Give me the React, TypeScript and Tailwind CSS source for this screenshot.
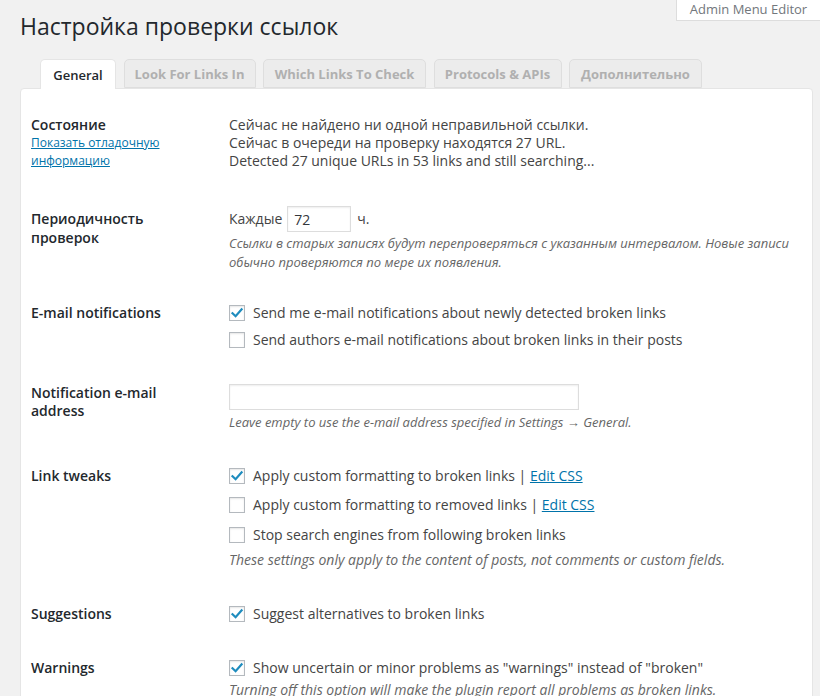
import React from 'react';

const Checkbox: React.FC<{ checked?: boolean }> = ({ checked }) => (
  <span className="w-4 h-4 shrink-0 bg-white border border-[#b4b9be] shadow-[inset_0_1px_2px_rgba(0,0,0,0.1)] flex items-center justify-center">
    {checked && (
      <svg width="14" height="14" viewBox="0 0 14 14">
        <path d="M2.5 7.2 L5.6 10.2 L11.6 3.4" fill="none" stroke="#1e8cbe" strokeWidth="2.2" strokeLinecap="square" />
      </svg>
    )}
  </span>
);

const CheckRow: React.FC<{ checked?: boolean; children: React.ReactNode; className?: string }> = ({ checked, children, className }) => (
  <label className={`flex items-center gap-2 h-[18px] ${className || ''}`}>
    <Checkbox checked={checked} />
    <span>{children}</span>
  </label>
);

const tabs = [
  { label: 'General', w: 'w-[76px]' },
  { label: 'Look For Links In', w: 'w-[132px]' },
  { label: 'Which Links To Check', w: 'w-[163px]' },
  { label: 'Protocols & APIs', w: 'w-[128px]' },
  { label: 'Дополнительно', w: 'w-[133px]' },
];

export default function App() {
  return (
    <div className="relative h-[696px] overflow-hidden bg-[#f1f1f1] font-['Open_Sans',sans-serif] text-[#444]">
      {/* Screen meta tab */}
      <div className="absolute top-0 right-0 w-[144px] h-[21px] bg-white border-l border-b border-[#ddd] text-[13px] leading-[19px] text-[#72777c] text-center">
        Admin Menu Editor
      </div>

      <h1 className="pl-[20px] pt-[12px] text-[23px] leading-[29px] text-[#23282d] font-normal">
        Настройка проверки ссылок
      </h1>

      {/* Tabs */}
      <div className="flex gap-[7.5px] ml-[40px] mt-[18px] -mb-px relative z-10">
        {tabs.map((t, i) => (
          <div
            key={t.label}
            className={
              i === 0
                ? `${t.w} h-[30px] text-center bg-white border border-b-0 border-[#e5e5e5] rounded-t-[5px] text-[13px] font-semibold text-[#23282d] leading-[30px]`
                : `${t.w} h-[29px] text-center bg-[#ececec] border border-[#dedede] rounded-t-[5px] text-[13px] font-bold text-[#b0b0b0] leading-[28px]`
            }
          >
            {t.label}
          </div>
        ))}
      </div>

      {/* Panel */}
      <div className="ml-[20px] mr-[7px] bg-white border border-[#e5e5e5] rounded-t-[4px] pt-[27px] px-[10px] h-[700px] text-[14px] leading-[18px]">
        {/* Status */}
        <div className="flex">
          <div className="w-[198px] shrink-0">
            <div className="font-semibold text-[#23282d]">Состояние</div>
            <a className="block text-[12px] leading-[18px] text-[#0073aa] underline">Показать отладочную<br />информацию</a>
          </div>
          <div>
            <div>Сейчас не найдено ни одной неправильной ссылки.</div>
            <div>Сейчас в очереди на проверку находятся 27 URL.</div>
            <div>Detected 27 unique URLs in 53 links and still searching...</div>
          </div>
        </div>

        {/* Interval */}
        <div className="flex mt-[36px]">
          <div className="w-[198px] shrink-0 pt-[3px] font-semibold text-[#23282d] leading-[19px]">
            Периодичность<br />проверок
          </div>
          <div className="flex-1">
            <div className="flex items-center">
              <span>Каждые</span>
              <input
                readOnly
                value="72"
                className="ml-[5px] w-[64px] h-[26px] border border-[#ddd] shadow-[inset_0_1px_2px_rgba(0,0,0,0.07)] px-[6px] text-[14px] text-[#32373c] outline-none"
              />
              <span className="ml-[6px]">ч.</span>
            </div>
            <div className="mt-[2px] text-[13px] leading-[19px] italic text-[#666]">
              Ссылки в старых записях будут перепроверяться с указанным интервалом. Новые записи обычно проверяются по мере их появления.
            </div>
          </div>
        </div>

        {/* Email notifications */}
        <div className="flex mt-[32px]">
          <div className="w-[198px] shrink-0 font-semibold text-[#23282d]">E-mail notifications</div>
          <div>
            <CheckRow checked>Send me e-mail notifications about newly detected broken links</CheckRow>
            <CheckRow className="mt-[9px]">Send authors e-mail notifications about broken links in their posts</CheckRow>
          </div>
        </div>

        {/* Notification address */}
        <div className="flex mt-[35px]">
          <div className="w-[198px] shrink-0 font-semibold text-[#23282d]">
            Notification e-mail<br />address
          </div>
          <div>
            <input
              readOnly
              className="block w-[350px] h-[26px] border border-[#ddd] shadow-[inset_0_1px_2px_rgba(0,0,0,0.07)] outline-none"
            />
            <div className="mt-[3px] text-[13px] leading-[19px] italic text-[#666]">
              Leave empty to use the e-mail address specified in Settings → General.
            </div>
          </div>
        </div>

        {/* Link tweaks */}
        <div className="flex mt-[35px]">
          <div className="w-[198px] shrink-0 font-semibold text-[#23282d]">Link tweaks</div>
          <div>
            <CheckRow checked>
              Apply custom formatting to broken links | <a className="text-[#0073aa] underline">Edit CSS</a>
            </CheckRow>
            <CheckRow className="mt-[11px]">
              Apply custom formatting to removed links | <a className="text-[#0073aa] underline">Edit CSS</a>
            </CheckRow>
            <CheckRow className="mt-[12px]">Stop search engines from following broken links</CheckRow>
            <div className="mt-[6px] text-[14px] leading-[19px] italic text-[#666]">
              These settings only apply to the content of posts, not comments or custom fields.
            </div>
          </div>
        </div>

        {/* Suggestions */}
        <div className="flex mt-[36px]">
          <div className="w-[198px] shrink-0 font-semibold text-[#23282d]">Suggestions</div>
          <div>
            <CheckRow checked>Suggest alternatives to broken links</CheckRow>
          </div>
        </div>

        {/* Warnings */}
        <div className="flex mt-[36px]">
          <div className="w-[198px] shrink-0 font-semibold text-[#23282d]">Warnings</div>
          <div>
            <CheckRow checked>Show uncertain or minor problems as "warnings" instead of "broken"</CheckRow>
            <div className="mt-[3px] text-[14px] leading-[19px] italic text-[#666]">
              Turning off this option will make the plugin report all problems as broken links.
            </div>
          </div>
        </div>
      </div>
    </div>
  );
}
